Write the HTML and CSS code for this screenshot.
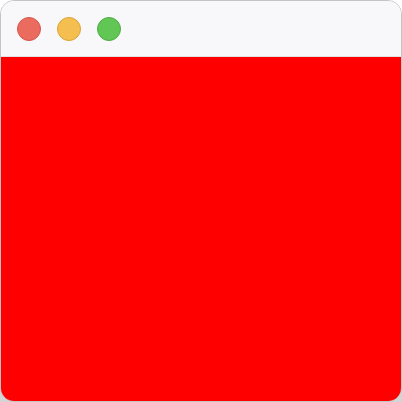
FILE: index.html
```html
<!DOCTYPE html>
<html>
<head>
<meta charset="utf-8">
<link rel="stylesheet" href="styles.css">
</head>
<body>
<div class="window">
  <div class="titlebar">
    <span class="light close"></span>
    <span class="light min"></span>
    <span class="light max"></span>
  </div>
  <div class="content"></div>
</div>
</body>
</html>
```

FILE: styles.css
```css
html, body {
  margin: 0;
  padding: 0;
  width: 402px;
  height: 402px;
  overflow: hidden;
}
body {
  background: linear-gradient(#ffffff 0%, #f2f2f2 50%, #d4d4d4 100%);
}
.window {
  box-sizing: border-box;
  width: 402px;
  height: 402px;
  border: 1px solid #c4c4c4;
  border-radius: 14px;
  overflow: hidden;
  display: flex;
  flex-direction: column;
  background: #f8f8fa;
  background-clip: padding-box;
}
.titlebar {
  box-sizing: border-box;
  height: 56px;
  flex: none;
  background: #f8f8fa;
  border-bottom: 1px solid #e2e2e4;
  display: flex;
  align-items: center;
  gap: 16px;
  padding: 0 0 0 16px;
}
.light {
  box-sizing: border-box;
  width: 24px;
  height: 24px;
  border-radius: 50%;
  display: block;
}
.close { background: #ec6b5f; border: 1px solid #d4574c; }
.min { background: #f4bf4f; border: 1px solid #d9a33a; }
.max { background: #62c655; border: 1px solid #4faa42; }
.content {
  flex: 1;
  background: #ff0000;
}
```
